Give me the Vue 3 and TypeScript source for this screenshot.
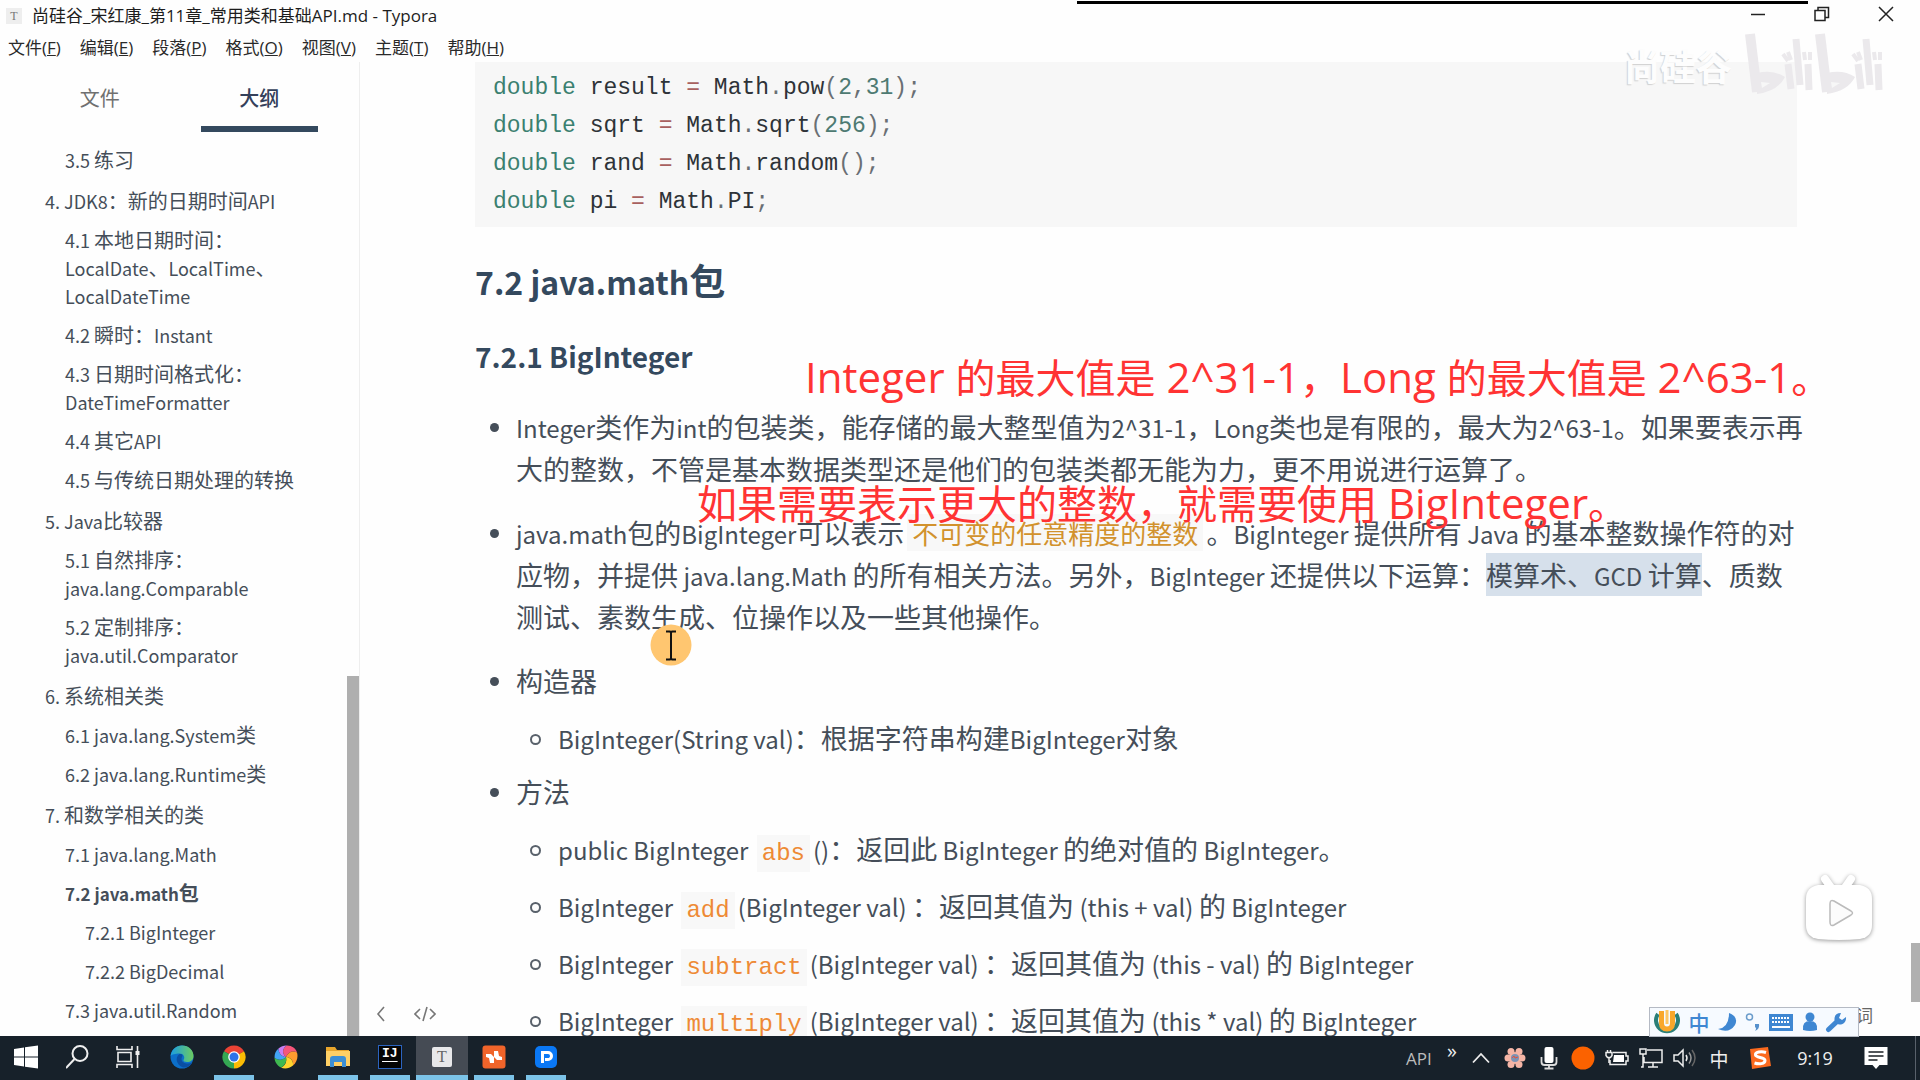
<script setup lang="ts">
import { h, type FunctionalComponent } from 'vue'

interface OutlineItem {
  level: number
  lines: string[]
  active?: boolean
}

interface Method {
  lead: string
  name: string
  rest: string
}

// Latin runs take a size of their own beside the Chinese text.
const Mixed: FunctionalComponent<{ text: string }> = ({ text }) =>
  (text.match(/[\x20-\x7e]+|[^\x20-\x7e]+/g) ?? []).map((run) =>
    /^[\x20-\x7e]/.test(run) ? h('span', { class: 'latin' }, run) : run,
  )
Mixed.props = ['text']

const menus = [
  ['文件', 'F'],
  ['编辑', 'E'],
  ['段落', 'P'],
  ['格式', 'O'],
  ['视图', 'V'],
  ['主题', 'T'],
  ['帮助', 'H'],
]

const outline: OutlineItem[] = [
  { level: 2, lines: ['3.5 练习'] },
  { level: 1, lines: ['4. JDK8：新的日期时间API'] },
  { level: 2, lines: ['4.1 本地日期时间：', 'LocalDate、LocalTime、', 'LocalDateTime'] },
  { level: 2, lines: ['4.2 瞬时：Instant'] },
  { level: 2, lines: ['4.3 日期时间格式化：', 'DateTimeFormatter'] },
  { level: 2, lines: ['4.4 其它API'] },
  { level: 2, lines: ['4.5 与传统日期处理的转换'] },
  { level: 1, lines: ['5. Java比较器'] },
  { level: 2, lines: ['5.1 自然排序：', 'java.lang.Comparable'] },
  { level: 2, lines: ['5.2 定制排序：', 'java.util.Comparator'] },
  { level: 1, lines: ['6. 系统相关类'] },
  { level: 2, lines: ['6.1 java.lang.System类'] },
  { level: 2, lines: ['6.2 java.lang.Runtime类'] },
  { level: 1, lines: ['7. 和数学相关的类'] },
  { level: 2, lines: ['7.1 java.lang.Math'] },
  { level: 2, lines: ['7.2 java.math包'], active: true },
  { level: 3, lines: ['7.2.1 BigInteger'] },
  { level: 3, lines: ['7.2.2 BigDecimal'] },
  { level: 2, lines: ['7.3 java.util.Random'] },
]

const code: string[][][] = [
  [['kw', 'double'], ['id', ' result '], ['op', '='], ['id', ' Math'], ['pn', '.'], ['id', 'pow'], ['pn', '('], ['num', '2'], ['pn', ','], ['num', '31'], ['pn', ');']],
  [['kw', 'double'], ['id', ' sqrt '], ['op', '='], ['id', ' Math'], ['pn', '.'], ['id', 'sqrt'], ['pn', '('], ['num', '256'], ['pn', ');']],
  [['kw', 'double'], ['id', ' rand '], ['op', '='], ['id', ' Math'], ['pn', '.'], ['id', 'random'], ['pn', '();']],
  [['kw', 'double'], ['id', ' pi '], ['op', '='], ['id', ' Math'], ['pn', '.'], ['id', 'PI'], ['pn', ';']],
]

const methods: Method[] = [
  { lead: 'public BigInteger ', name: 'abs', rest: '()：返回此 BigInteger 的绝对值的 BigInteger。' },
  { lead: 'BigInteger ', name: 'add', rest: '(BigInteger val) ：返回其值为 (this + val) 的 BigInteger' },
  { lead: 'BigInteger ', name: 'subtract', rest: '(BigInteger val) ：返回其值为 (this - val) 的 BigInteger' },
  { lead: 'BigInteger ', name: 'multiply', rest: '(BigInteger val) ：返回其值为 (this * val) 的 BigInteger' },
]
</script>

<template>
  <div class="screen">
    <header class="titlebar">
      <span class="app-icon">T</span>
      <h1 class="title">尚硅谷_宋红康_第11章_常用类和基础API.md - Typora</h1>
      <div class="controls">
        <button type="button" aria-label="最小化"><svg width="16" height="16" viewBox="0 0 16 16"><path d="M1 8.500h14" /></svg></button>
        <button type="button" aria-label="还原"><svg width="16" height="16" viewBox="0 0 16 16"><path d="M1 4.500h10v10H1zM4 4.500V1.500h10.500v10H11" /></svg></button>
        <button type="button" aria-label="关闭"><svg width="16" height="16" viewBox="0 0 16 16"><path d="M1 1l14 14M15 1L1 15" /></svg></button>
      </div>
    </header>

    <nav class="menubar">
      <button v-for="[name, key] in menus" :key="key" type="button">{{ name }}(<u>{{ key }}</u>)</button>
    </nav>

    <div class="body">
      <aside class="sidebar">
        <div class="tabs">
          <button type="button">文件</button>
          <button type="button" class="on">大纲</button>
        </div>
        <ul class="outline">
          <li v-for="item in outline" :key="item.lines[0]" :class="['level' + item.level, { active: item.active }]">
            <a href="#"><span v-for="line in item.lines" :key="line" class="line"><Mixed :text="line" /></span></a>
          </li>
        </ul>
        <div class="side-thumb"></div>
      </aside>

      <main class="doc">
        <pre class="code"><div v-for="(row, i) in code" :key="i"><span v-for="(tok, j) in row" :key="j" :class="tok[0]">{{ tok[1] }}</span></div></pre>
        <h2><Mixed text="7.2 java.math包" /></h2>
        <h3><Mixed text="7.2.1 BigInteger" /></h3>
        <ul class="notes">
          <li class="para">
            <Mixed text="Integer类作为int的包装类，能存储的最大整型值为2^31-1，Long类也是有限的，最大为2^63-1。如果要表示再" /><br />
            <Mixed text="大的整数，不管是基本数据类型还是他们的包装类都无能为力，更不用说进行运算了。" />
          </li>
          <li class="para">
            <Mixed text="java.math包的BigInteger可以表示" />
            <code class="zh">不可变的任意精度的整数</code>
            <Mixed text="。BigInteger 提供所有 Java 的基本整数操作符的对" /><br />
            <Mixed text="应物，并提供 java.lang.Math 的所有相关方法。另外，BigInteger 还提供以下运算：" />
            <mark><Mixed text="模算术、GCD 计算" /></mark>
            <Mixed text="、质数" /><br />
            <Mixed text="测试、素数生成、位操作以及一些其他操作。" />
          </li>
          <li>
            构造器
            <ul class="sub">
              <li><Mixed text="BigInteger(String val)：根据字符串构建BigInteger对象" /></li>
            </ul>
          </li>
          <li>
            方法
            <ul class="sub">
              <li v-for="m in methods" :key="m.name">
                <Mixed :text="m.lead" /><code>{{ m.name }}</code><Mixed :text="m.rest" />
              </li>
            </ul>
          </li>
        </ul>
        <div class="doc-tools">
          <button type="button" aria-label="隐藏侧边栏"><svg width="12" height="16" viewBox="0 0 12 16"><path d="M9 1L3 8l6 7" /></svg></button>
          <button type="button" aria-label="源代码模式"><svg width="22" height="16" viewBox="0 0 22 16"><path d="M6 3L1 8l5 5M16 3l5 5-5 5M13 1L9 15" /></svg></button>
        </div>
        <span class="word-count">词</span>
        <div class="doc-thumb"></div>
      </main>
    </div>

    <footer class="taskbar">
      <div class="apps">
        <button type="button" aria-label="开始"><svg width="24" height="24" viewBox="0 0 24 24"><path fill="#fff" d="M0 4l10-1.500V11.500H0zM11 2.300L24 .5v11H11zM0 12.500h10v9L0 20zM11 12.500h13v11l-13-1.800z" /></svg></button>
        <button type="button" aria-label="搜索"><svg width="24" height="24" viewBox="0 0 24 24" fill="none" stroke="#eee" stroke-width="2"><circle cx="14" cy="8.500" r="7.500" /><path d="M8.500 14L0 23" /></svg></button>
        <button type="button" aria-label="任务视图"><svg width="28" height="24" viewBox="0 0 28 24" fill="none" stroke="#eee" stroke-width="1.600"><path d="M1 1v3.500h15V1M1 23v-3.500h15V23M2 7.500h13v9H2zM21.500 1v22" /><path d="M19.500 6h4v4h-4z" fill="#eee" stroke="none" /></svg></button>
        <button type="button" aria-label="Edge">
          <svg width="24" height="24" viewBox="0 0 24 24">
            <defs>
              <linearGradient id="edge-top" x1="0" x2="1"><stop offset="0" stop-color="#1b9de2" /><stop offset="1" stop-color="#6ccb5f" /></linearGradient>
            </defs>
            <circle cx="12" cy="12" r="11.500" fill="#0c6fc9" />
            <path fill="url(#edge-top)" d="M.6 11C1.500 4.500 6.500.5 12 .5c7 0 11.500 5 11.500 10.500 0 4-3 6-6.500 6-2.500 0-4-1-3.500-2 2-3 0-6.500-4-6.500-4 0-8 1-8.900 2.500z" />
            <path fill="#0a4fa3" d="M9 9.500c-4 3-3 10 4 13 4 .5 7.500-2 9.500-5-5 2.500-11 .5-11-3.500 0-2 1-2.500 1-3.500s-2-2-3.500-1z" />
          </svg>
        </button>
        <button type="button" class="open" aria-label="Chrome">
          <svg width="24" height="24" viewBox="0 0 24 24">
            <path fill="#ea4335" d="M12 12L2 6.200A11.500 11.500 0 0 1 22 6.200z" />
            <path fill="#fbbc04" d="M12 12l10-5.800A11.500 11.500 0 0 1 12 23.500z" />
            <path fill="#34a853" d="M12 12v11.500A11.500 11.500 0 0 1 2 6.200z" />
            <path fill="#ea4335" d="M12 6.500h10l-4 1.500-6 4z" />
            <circle cx="12" cy="12" r="5.800" fill="#fff" /><circle cx="12" cy="12" r="4.500" fill="#2f73e8" />
          </svg>
        </button>
        <button type="button" aria-label="浏览器">
          <svg width="24" height="24" viewBox="0 0 24 24">
            <path fill="#f6557a" d="M12 12C8 9 8 3 13 .5c5 0 9 3 10 7C19 5 14 7 12 12z" />
            <path fill="#ff9b2f" d="M12 12c2-5 7-7 11-4.500 1.500 5-.5 10-4 13 .5-5-2-8-7-8.500z" />
            <path fill="#ffd52e" d="M12 12c5 .5 7.500 4 7 8.500-4 3.500-9 3.500-12 2 4.500-2 6-6 5-10.500z" />
            <path fill="#3fb950" d="M12 12c1 4.500-1 8.500-5 10.500-4-2-6.500-6-6.500-10 3.500 3 8 3 11.500-.5z" />
            <path fill="#42a5f5" d="M12 12c-3.500 3.500-8 3.500-11.500.5 0-4 1.500-7 4-9 0 4 2.500 8 7.500 8.500z" />
            <path fill="#c77df3" d="M12 12C7 11.500 4.500 7.500 4.500 3.500 7 1.200 10 .3 13 .5 8 3 8 9 12 12z" />
          </svg>
        </button>
        <button type="button" class="open" aria-label="文件资源管理器"><svg width="24" height="24" viewBox="0 0 24 24"><path fill="#e9a62c" d="M0 2h9l2 3h12v6H0z" /><path fill="#ffd065" d="M0 6h24v15H0z" /><path fill="#3c8fd4" d="M4 22v-8q0-3 3-3h10q3 0 3 3v8h-4v-5H8v5z" /></svg></button>
        <button type="button" class="open" aria-label="IntelliJ IDEA"><span class="ij">IJ</span></button>
        <button type="button" class="open current" aria-label="Typora"><span class="ty">T</span></button>
        <button type="button" class="open" aria-label="Xmind"><svg width="24" height="24" viewBox="0 0 24 24"><rect x=".5" y=".5" width="23" height="23" rx="3" fill="#f0642a" /><path fill="#fff" d="M4 9h5l3 3V6h4l1 5 3 1v3h-5l-3-3v6H8l-1-5-3-1z" /></svg></button>
        <button type="button" class="open" aria-label="PixPin"><svg width="24" height="24" viewBox="0 0 24 24"><rect x="1" y="1" width="22" height="22" rx="5" fill="#0a78f5" /><path d="M8.500 18V7.500H14a3.500 3.500 0 0 1 0 7H11" fill="none" stroke="#fff" stroke-width="3" /></svg></button>
      </div>

      <div class="tray">
        <span class="api">API</span>
        <span class="more">»</span>
        <button type="button" aria-label="显示隐藏的图标"><svg width="18" height="12" viewBox="0 0 18 12" fill="none" stroke="#eee" stroke-width="1.800"><path d="M1 10.500L9 2l8 8.500" /></svg></button>
        <button type="button" aria-label="花"><svg width="22" height="22" viewBox="0 0 22 22"><g fill="#f5b5a6"><circle cx="7" cy="4.500" r="3.500" /><circle cx="15" cy="4.500" r="3.500" /><circle cx="4" cy="11" r="3.500" /><circle cx="18" cy="11" r="3.500" /><circle cx="7" cy="17.500" r="3.500" /><circle cx="15" cy="17.500" r="3.500" /><circle cx="11" cy="11" r="6" /></g><circle cx="11" cy="11" r="4" fill="#7c93b5" /><path d="M8 11l2-2 1 2 3-1" stroke="#e8503a" fill="none" /></svg></button>
        <button type="button" aria-label="麦克风"><svg width="18" height="24" viewBox="0 0 18 24"><rect x="4.500" y="1" width="9" height="16" rx="2" fill="#fff" /><path d="M1.500 11v5q0 3 3 3h9q3 0 3-3v-5M9 19v3M4.500 22.500h9" fill="none" stroke="#ddd" stroke-width="1.800" /></svg></button>
        <button type="button" aria-label="录制"><svg width="24" height="24" viewBox="0 0 24 24"><circle cx="12" cy="12" r="11.500" fill="#fb6200" /></svg></button>
        <button type="button" aria-label="电池"><svg width="24" height="20" viewBox="0 0 24 20" fill="none" stroke="#eee" stroke-width="1.500"><path d="M8 4.500h13V8h2v5h-2v3.500H5V12" /><path d="M9 7h10v7H8z" fill="#fff" stroke="none" /><path d="M1 4.500h6v3L5.500 9.500h-3L1 7.500zM2.500 2v2M5.500 2v2M4 9.500V15" /></svg></button>
        <button type="button" aria-label="网络"><svg width="24" height="22" viewBox="0 0 24 22" fill="none" stroke="#eee" stroke-width="1.500"><path d="M8 3h15v12.500H5V10M14 15.500V19.500M9 20h10M1 2h6v5H1zM4 7v13H2" /></svg></button>
        <button type="button" aria-label="音量"><svg width="24" height="22" viewBox="0 0 24 22" fill="none" stroke="#eee" stroke-width="1.500"><path d="M1 8h4l5-5v16l-5-5H1z" /><path d="M13 8q2 3 0 6" /><path d="M16 5.500q4 5.500 0 11" stroke="#999" /><path d="M19 3q6 8 0 16" stroke="#666" /></svg></button>
        <span class="ime">中</span>
        <button type="button" class="sogou" aria-label="搜狗输入法"><svg width="24" height="24" viewBox="0 0 24 24"><path fill="#fb6a1e" d="M2 3l18-2 3 19-19 3z" /><path d="M18 6.500C13 5 7 6 7.500 9s9.500 2 9.500 5.500-6 4-10.500 2.500" fill="none" stroke="#fff" stroke-width="3" /></svg></button>
        <time class="clock">9:19</time>
        <button type="button" class="notice" aria-label="通知"><svg width="24" height="24" viewBox="0 0 24 24"><path fill="#fff" d="M.5 1h23v18h-8l-3.500 4-3.500-4h-8z" /><path d="M4.500 6h15M4.500 10h15M4.500 14h9" stroke="#1a1f25" stroke-width="1.500" /></svg></button>
        <span class="show-desktop"></span>
      </div>
    </footer>

    <div class="top-line"></div>
    <div class="watermark">
      <span>尚硅谷</span>
      <svg width="140" height="66" viewBox="0 0 140 66" fill="none" stroke="#ebe9ec">
        <g id="wm-half">
          <path d="M5 2l7 58" stroke-width="10" />
          <path d="M12 41q16-4 28 4-7 14-28 17z" fill="#ebe9ec" stroke="none" />
          <path d="M16 50l9 1-8 5z" fill="#f7f7f7" stroke="none" />
          <path d="M43 32l3 25M51 7l4 46M63 32l1 26" stroke-width="7" />
          <path d="M38 22l5 7M43 20l3 8M59 20l1 8M65 20v8" stroke-width="4" />
        </g>
        <use href="#wm-half" x="70" />
      </svg>
    </div>
    <p class="caption first"><Mixed text="Integer 的最大值是 2^31-1，Long 的最大值是 2^63-1。" /></p>
    <p class="caption second"><Mixed text="如果需要表示更大的整数，就需要使用 BigInteger。" /></p>
    <svg class="pointer" width="42" height="42" viewBox="0 0 42 42"><circle cx="21" cy="21" r="20.500" fill="#ffc670" /><path d="M16 7.500h4l1 1 1-1h4M21 8v27M16 35.500h4l1-1 1 1h4" fill="none" stroke="#111" stroke-width="2" /></svg>
    <svg class="player" width="76" height="76" viewBox="0 0 76 76">
      <g fill="#fff">
        <path d="M24 7l7 10M50 7l-7 10" stroke="#fff" stroke-width="8" stroke-linecap="round" />
        <path d="M17 13h42q12 2 12 14v26q0 12-12 14-21 2-42 0Q5 65 5 53V27q0-12 12-14z" />
      </g>
      <path d="M29 32q0-5 4-3l17 10q3 2 0 4L33 53q-4 2-4-3z" fill="#fcfcfc" stroke="#bbb" stroke-width="1.500" />
    </svg>
    <div class="ime-bar">
      <svg width="28" height="28" viewBox="0 0 28 28"><path d="M5 6a11 11 0 1 0 18 0" fill="none" stroke="#2b7f78" stroke-width="4" /><path d="M8.500 3v12q0 6 5.500 6t5.500-6V3" fill="none" stroke="#f9a72b" stroke-width="5" /><path d="M14 2v14" stroke="#fdc766" stroke-width="3" /></svg>
      <span>中</span>
      <svg width="20" height="22" viewBox="0 0 20 22"><path fill="#3f87d2" d="M12 2q10 4 6 12-6 9-17 4 11-1 11-16z" /></svg>
      <svg width="16" height="22" viewBox="0 0 16 22"><circle cx="4.500" cy="6" r="3" fill="none" stroke="#6c9dcc" stroke-width="1.500" /><path fill="#5590cc" d="M10 13h4q1 5-4 7 2-3 0-4z" /></svg>
      <svg width="26" height="20" viewBox="0 0 26 20"><rect x="1" y="2" width="24" height="17" fill="#3f87d2" /><path d="M4 6h18M4 10h18" stroke="#fff" stroke-width="2" stroke-dasharray="2 1" /><path d="M4 15h18" stroke="#fff" stroke-width="2" /></svg>
      <svg width="16" height="20" viewBox="0 0 16 20"><circle cx="8" cy="5" r="4.500" fill="#3f87d2" /><path fill="#3f87d2" d="M1 18q-1-9 7-9t7 9q-7 2-14 0z" /></svg>
      <svg width="22" height="22" viewBox="0 0 22 22"><path d="M3.500 18.500L12 10.500" stroke="#3f87d2" stroke-width="5" stroke-linecap="round" /><path fill="#3f87d2" d="M16 2q-7 0-6.500 7 2 6 8 4 4-2 3.500-7l-4 3-3-2z" /></svg>
    </div>
  </div>
</template>

<style>
body {
  margin: 0;
  background: #fefefe;
}

.latin {
  font-size: 24px;
  line-height: 1;
}
</style>

<style scoped>
.screen {
  position: relative;
  display: flex;
  flex-direction: column;
  height: 100vh;
  overflow: hidden;
  background: #fefefe;
  color: #454e59;
  font-family: "Noto Sans CJK SC", sans-serif;
}

button {
  padding: 0;
  border: 0;
  background: none;
  color: inherit;
  font: inherit;
}

svg {
  display: block;
}

ul {
  margin: 0;
  padding: 0;
  list-style: none;
}

.titlebar {
  display: flex;
  flex: none;
  align-items: center;
  height: 32px;
  padding: 0 2px 0 6px;
}

.app-icon {
  width: 16px;
  background: #eeeeee;
  color: #777777;
  font: 12px/16px "Liberation Serif", serif;
  text-align: center;
}

.title {
  flex: 1;
  margin: 0 0 0 10px;
  color: #1d1d1d;
  font: 400 17px/32px "Open Sans", "Noto Sans CJK SC", sans-serif;
}

.controls {
  display: flex;
  margin-bottom: 4px;
}

.controls button {
  display: flex;
  justify-content: center;
  width: 64px;
}

.controls svg {
  fill: none;
  stroke: #222222;
  stroke-width: 1.5;
}

.menubar {
  display: flex;
  flex: none;
  gap: 19px;
  height: 30px;
  padding-left: 8px;
  color: #2a2a2a;
  font: 17px/32px "Open Sans", "Noto Sans CJK SC", sans-serif;
}

.body {
  display: flex;
  flex: 1;
  min-height: 0;
}

.sidebar {
  position: relative;
  box-sizing: border-box;
  flex: none;
  width: 360px;
  border-right: 1px solid #eeeeee;
}

.tabs {
  display: flex;
  padding: 0 20px;
  margin-bottom: 8px;
}

.tabs button {
  flex: 1;
  height: 70px;
  color: #707070;
  font-size: 20px;
}

.tabs .on {
  position: relative;
  color: #34405a;
  font-weight: 500;
}

.tabs .on::after {
  content: "";
  position: absolute;
  right: 21px;
  bottom: 0;
  left: 21px;
  height: 6px;
  background: #34495e;
}

.outline {
  font-size: 20px;
  line-height: 28px;
}

.outline :deep(.latin) {
  font-size: 18px;
}

.outline a {
  display: block;
  padding: 6px 0 5px;
  color: inherit;
  text-decoration: none;
}

.line {
  display: block;
  white-space: nowrap;
}

.level1 {
  margin-top: 2px;
  padding-left: 45px;
}

.level2 {
  padding-left: 65px;
}

.level3 {
  padding-left: 85px;
}

.active {
  font-weight: 600;
}

.outline .active :deep(.latin) {
  font-size: 17px;
}

.side-thumb {
  position: absolute;
  right: 0;
  bottom: 0;
  width: 12px;
  height: 360px;
  background: #afafaf;
}

.doc {
  position: relative;
  flex: 1;
  min-width: 0;
  overflow: hidden;
  padding: 0 123px 0 115px;
}

.code {
  margin: 0;
  padding: 7px 18px 6px;
  background: #f7f7f7;
  color: #2e3338;
  font: 23px/38px "Liberation Mono", monospace;
}

.kw,
.num {
  color: #3b8070;
}

.num {
  color: #4e7a72;
}

.op {
  color: #a8605f;
}

.pn {
  color: #6a6f74;
}

h2,
h3 {
  margin: 0;
  color: #34495e;
  font-weight: 600;
}

h2 {
  margin-top: 25px;
  font-size: 36px;
  line-height: 54px;
}

h2 :deep(.latin) {
  font-size: 32px;
}

h3 {
  margin: 32px 0 24px;
  line-height: 44px;
}

h3 :deep(.latin) {
  font-size: 28px;
}

.notes {
  font-size: 27px;
  line-height: 42px;
  white-space: nowrap;
}

.notes > li {
  position: relative;
  margin-bottom: 12px;
  padding-left: 41px;
}

.notes > .para {
  margin-bottom: 22px;
}

.notes > li::before {
  content: "";
  position: absolute;
  top: 17px;
  left: 15px;
  width: 9px;
  height: 9px;
  border-radius: 50%;
  background: #454e59;
}

.sub > li {
  position: relative;
  margin-top: 15px;
  padding-left: 42px;
}

.sub > li::before {
  content: "";
  position: absolute;
  top: 17px;
  left: 14px;
  width: 7px;
  height: 7px;
  border: 2px solid #59616b;
  border-radius: 50%;
}

code {
  margin: 0 3px;
  padding: 5px;
  background: #f8f8f8;
  color: #ee8a35;
  font: 24px "Liberation Mono", monospace;
}

.zh {
  padding: 0 5px;
  color: #d2922d;
  font: 26px/28px "Noto Sans CJK SC", sans-serif;
}

mark {
  padding: 2px 0;
  background: #d6e0eb;
  color: inherit;
}

.doc-tools {
  position: absolute;
  bottom: 14px;
  left: 15px;
  display: flex;
  gap: 27px;
}

.doc-tools svg {
  fill: none;
  stroke: #777777;
  stroke-width: 1.6;
}

.word-count {
  position: absolute;
  right: 47px;
  bottom: 9px;
  color: #666666;
  font-size: 17px;
}

.doc-thumb {
  position: absolute;
  right: 0;
  bottom: 34px;
  width: 9px;
  height: 59px;
  background: #b0b0b0;
}

.taskbar {
  position: relative;
  display: flex;
  flex: none;
  justify-content: space-between;
  height: 44px;
  background: #17212a;
  color: #eeeeee;
}

.apps,
.tray {
  display: flex;
}

.apps button {
  position: relative;
  display: flex;
  align-items: center;
  justify-content: center;
  width: 52px;
  padding-bottom: 2px;
}

.apps .open::after {
  content: "";
  position: absolute;
  right: 6px;
  bottom: 0;
  left: 6px;
  height: 5px;
  background: #7cc3e8;
}

.apps .current {
  background: #454b54;
}

.apps .current::after {
  right: 0;
  left: 0;
}

.ij {
  box-sizing: border-box;
  width: 24px;
  height: 24px;
  padding-left: 3px;
  border: 1px solid #2b64c0;
  background: #050505;
  color: #ffffff;
  font: 700 13px/16px "Liberation Mono", monospace;
  text-align: left;
  text-decoration: underline;
  text-underline-offset: 4px;
}

.ty {
  width: 20px;
  height: 20px;
  border-radius: 2px;
  background: #e8e8ea;
  color: #666666;
  font: 16px/20px "Liberation Serif", serif;
}

.tray {
  align-items: center;
  padding-right: 4px;
}

.tray button,
.ime {
  display: flex;
  justify-content: center;
  width: 34px;
}

.api {
  width: 34px;
  color: #bbbbbb;
  font: 17px "Open Sans", sans-serif;
}

.more {
  width: 24px;
  margin-bottom: 14px;
  font: 20px/20px "Open Sans", sans-serif;
  text-align: center;
}

.ime {
  font-size: 19px;
}

.tray .sogou {
  width: 48px;
}

.clock {
  width: 62px;
  font: 18px "Open Sans", sans-serif;
  text-align: center;
}

.tray .notice {
  width: 60px;
}

.show-desktop {
  align-self: stretch;
  width: 9px;
  border-right: 1px solid #59616b;
}

.top-line {
  position: absolute;
  top: 1px;
  right: 112px;
  width: 731px;
  height: 3px;
  background: #000000;
}

.watermark {
  position: absolute;
  top: 32px;
  right: 35px;
  display: flex;
  gap: 13px;
  align-items: center;
  color: #fdfdfd;
  font-size: 36px;
  font-weight: 700;
  text-shadow: -1px 1px 1px #d0d0d0;
}

.caption {
  position: absolute;
  margin: 0;
  color: #ff3333;
  font: 40px/56px "Open Sans", "Noto Sans CJK SC", sans-serif;
  white-space: nowrap;
}

.caption :deep(.latin) {
  font-size: 42px;
}

.first {
  top: 350px;
  left: 805px;
}

.second {
  top: 476px;
  left: 697px;
}

.pointer {
  position: absolute;
  top: 624px;
  left: 650px;
}

.player {
  position: absolute;
  right: 43px;
  bottom: 132px;
  filter: drop-shadow(0 1px 2px #999999);
}

.ime-bar {
  position: absolute;
  right: 61px;
  bottom: 43px;
  display: flex;
  box-sizing: border-box;
  align-items: center;
  justify-content: space-between;
  width: 210px;
  height: 30px;
  padding: 0 11px 0 3px;
  border: 1px solid #b5bac4;
  background: #f6faff;
  color: #3f87d2;
  font-size: 21px;
  font-weight: 500;
}

.ime-bar span {
  line-height: 24px;
}
</style>
